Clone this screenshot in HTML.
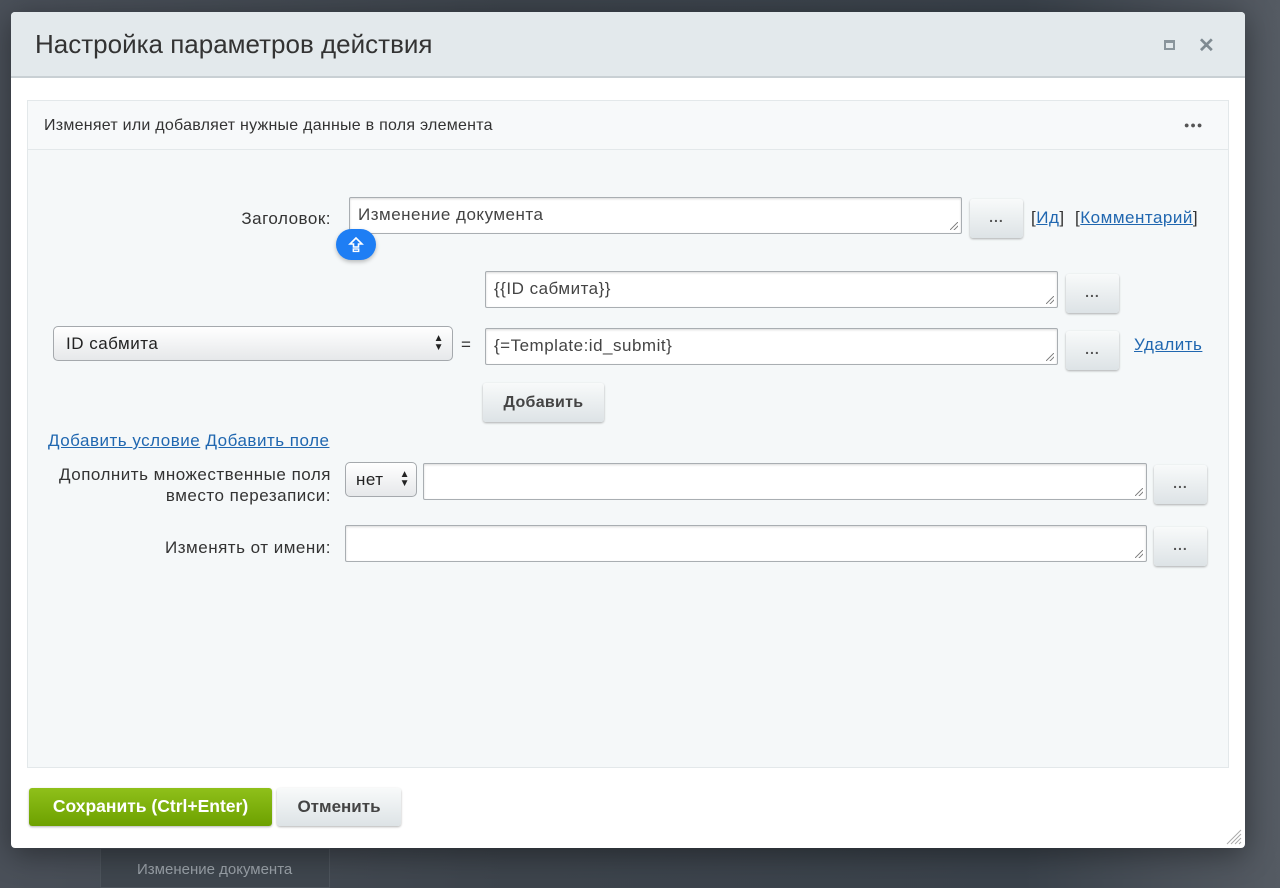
<!DOCTYPE html>
<html><head><meta charset="utf-8"><style>
*{box-sizing:border-box;margin:0;padding:0}
body{width:1280px;height:877px;overflow:hidden;background:linear-gradient(90deg,#4a5059 0%,#3d444c 40%,#3a424b 80%,#555b63 100%);font-family:"Liberation Sans",sans-serif;position:relative;color:#333}
.a{position:absolute}
.bg1{left:100px;top:848px;width:230px;height:40px;border:1px solid #4d545c;background:#3f464e}
.bg1 span{position:absolute;left:36px;top:12px;color:#9aa1a8;font-size:15px}
.modal{left:11px;top:12px;width:1234px;height:836px;background:#fff;border-radius:4px;overflow:hidden;box-shadow:0 6px 30px rgba(0,0,0,.4)}
.hdr{left:0;top:0;width:1234px;height:66px;background:#e3e9ec;border-bottom:2px solid #c9d0d4}
.hdr h1{position:absolute;left:24px;top:17px;font-size:26px;font-weight:normal;color:#333}
.panel{left:16px;top:88px;width:1202px;height:668px;background:#f5f8f9;border:1px solid #e3e8ea}
.ph{left:0;top:0;width:1200px;height:49px;border-bottom:1px solid #e3e8ea;background:#f7f9fa}
.ph span{position:absolute;left:16px;top:16px;font-size:16px;letter-spacing:0.25px;color:#333}
.t{font-size:17px;letter-spacing:0.5px}
.lbl{color:#333;text-align:right}
.inp{background:#fff;border:1px solid #a9aeb2;border-radius:2px;box-shadow:inset 0 1px 2px rgba(0,0,0,.15);color:#444;padding:8px 8px}
.inp:after{content:"";position:absolute;right:3px;bottom:3px;width:8px;height:8px;background:linear-gradient(135deg,transparent 45%,#888 45%,#888 55%,transparent 55%,transparent 70%,#888 70%,#888 80%,transparent 80%)}
.btn{background:linear-gradient(#f8fafa,#dde3e6);border-radius:3px;box-shadow:0 1px 2px rgba(0,0,0,.3);font-size:14px;color:#555;text-align:center;font-weight:bold;letter-spacing:1px}
.lnk{color:#2067b0;text-decoration:underline}
.sel{background:linear-gradient(#fff,#e6e8ea);border:1px solid #a5a9ad;border-radius:5px;color:#222}
</style></head><body>
<div class="a bg1"><span>Изменение документа</span></div>
<div class="a modal">
 <div class="a hdr"><h1>Настройка параметров действия</h1>
  <div class="a" style="left:1153px;top:28px;width:11px;height:10px;border:2px solid #8a959c;border-top-width:3px"></div>
  <div class="a" style="left:1187px;top:21px;font-size:20px;font-weight:bold;color:#7f8a91">✕</div>
 </div>
 <div class="a panel">
  <div class="a ph"><span>Изменяет или добавляет нужные данные в поля элемента</span>
   <div class="a" style="left:1156px;top:19px;font-size:9px;color:#555;letter-spacing:1px">●●●</div></div>
  <div class="a lbl t" style="left:100px;top:108px;width:203px">Заголовок:</div>
  <div class="a inp t" style="left:321px;top:96px;width:613px;height:37px;padding-top:7px">Изменение документа</div>
  <div class="a" style="left:308px;top:128px;width:40px;height:31px;border-radius:16px;background:#1e7ef4;box-shadow:0 2px 4px rgba(0,0,0,.25)">
   <svg width="40" height="31" viewBox="0 0 40 31"><path d="M20 9l-6 6h3.5v3h5v-3H26z" fill="none" stroke="#fff" stroke-width="1.6"/><rect x="17.3" y="20" width="5.4" height="2.4" fill="none" stroke="#fff" stroke-width="1.4"/></svg></div>
  <div class="a btn" style="left:942px;top:98px;width:53px;height:39px;line-height:36px">...</div>
  <div class="a t" style="left:1003px;top:107px;color:#333">[<span class="lnk">Ид</span>] &nbsp;[<span class="lnk">Комментарий</span>]</div>
  <div class="a inp t" style="left:457px;top:170px;width:573px;height:37px;padding-top:7px">{{ID сабмита}}</div>
  <div class="a btn" style="left:1038px;top:173px;width:53px;height:39px;line-height:36px">...</div>
  <div class="a sel t" style="left:25px;top:225px;width:400px;height:35px;padding:7px 12px">ID сабмита<span style="position:absolute;right:8px;top:7px;font-size:10px;line-height:9px">▲<br>▼</span></div>
  <div class="a t" style="left:433px;top:234px">=</div>
  <div class="a inp t" style="left:457px;top:227px;width:573px;height:37px;padding-top:7px">{=Template:id_submit}</div>
  <div class="a btn" style="left:1038px;top:230px;width:53px;height:39px;line-height:36px">...</div>
  <div class="a lnk t" style="left:1106px;top:234px">Удалить</div>
  <div class="a btn" style="left:455px;top:282px;width:121px;height:39px;line-height:39px;font-size:16px;color:#444;letter-spacing:0.3px">Добавить</div>
  <div class="a t" style="left:20px;top:330px"><span class="lnk">Добавить условие</span> <span class="lnk">Добавить поле</span></div>
  <div class="a lbl t" style="left:0px;top:363px;width:303px;line-height:21px">Дополнить множественные поля<br>вместо перезаписи:</div>
  <div class="a sel t" style="left:317px;top:361px;width:72px;height:35px;padding:7px 10px">нет<span style="position:absolute;right:6px;top:7px;font-size:10px;line-height:9px">▲<br>▼</span></div>
  <div class="a inp" style="left:395px;top:362px;width:724px;height:37px"></div>
  <div class="a btn" style="left:1126px;top:364px;width:53px;height:39px;line-height:36px">...</div>
  <div class="a lbl t" style="left:80px;top:437px;width:223px">Изменять от имени:</div>
  <div class="a inp" style="left:317px;top:424px;width:802px;height:37px"></div>
  <div class="a btn" style="left:1126px;top:426px;width:53px;height:39px;line-height:36px">...</div>
 </div>
 <div class="a" style="left:18px;top:776px;width:243px;height:38px;border-radius:3px;background:linear-gradient(#8fc01a,#6da100);box-shadow:0 1px 2px rgba(0,0,0,.3);color:#fff;font-weight:bold;font-size:17.5px;text-align:center;line-height:37px">Сохранить (Ctrl+Enter)</div>
 <div class="a btn" style="left:266px;top:776px;width:124px;height:38px;line-height:38px;font-size:17px;color:#444;letter-spacing:0">Отменить</div>
 <svg class="a" style="left:1214px;top:816px" width="18" height="18"><path d="M2 16L16 2M6 16L16 6M10 16L16 10M14 16L16 14" stroke="#aaa" stroke-width="1"/></svg>
</div>
</body></html>
